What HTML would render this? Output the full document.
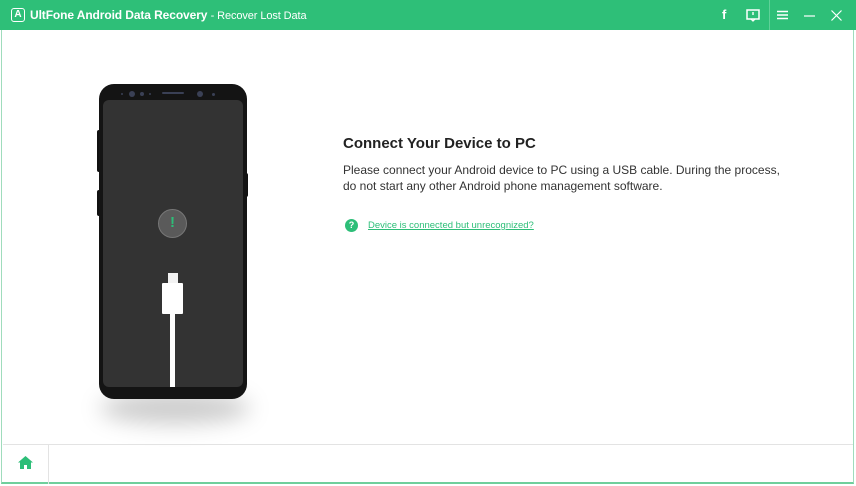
<!DOCTYPE html>
<html><head><meta charset="utf-8"><style>
*{margin:0;padding:0;box-sizing:border-box}
body{width:856px;height:486px;background:#fff;position:relative;overflow:hidden;font-family:"Liberation Sans",sans-serif}
.win{position:absolute;left:1px;top:0;width:853px;height:484px;border:1px solid #9fdcbc;border-top:none;border-bottom:2px solid #6fcf9c;background:#fff}
.tb{position:absolute;left:0;top:0;width:856px;height:30px;background:#2ebf78;color:#fff}
.tb .t{position:absolute;left:30px;top:8px;font-size:12px;font-weight:bold;letter-spacing:-0.1px}
.tb .t span{font-weight:normal;font-size:11px}
.abs{position:absolute}
h1{position:absolute;left:343px;top:135px;font-size:15px;font-weight:bold;color:#222}
.p{position:absolute;left:343px;top:162px;font-size:12px;color:#333;line-height:16px;width:445px}
.link{position:absolute;left:368px;top:220px;font-size:9.5px;color:#2dbe78;text-decoration:underline}
</style></head><body>
<div class="win"></div>
<div class="tb">
<div class="abs" style="left:11px;top:8px;width:14px;height:14px;border:1.5px solid #fff;border-radius:3px;font-size:10px;font-weight:bold;text-align:center;line-height:11px">A</div>
<div class="t">UltFone Android Data Recovery <span>- Recover Lost Data</span></div>
<div class="abs" style="left:722px;top:7px;font-size:13px;font-weight:bold">f</div>
<svg class="abs" style="left:746px;top:9px" width="14" height="13"><rect x="1" y="1" width="12" height="9" fill="none" stroke="#fff" stroke-width="1.5"/><path d="M5 10l2 2 2-2" fill="none" stroke="#fff" stroke-width="1.3"/><rect x="6.3" y="3" width="1.4" height="3" fill="#fff"/></svg>
<div class="abs" style="left:769px;top:0;width:1px;height:30px;background:#5fd198"></div>
<svg class="abs" style="left:777px;top:10px" width="11" height="10"><path d="M0 1.5h11M0 5h11M0 8.5h11" stroke="#fff" stroke-width="1.5"/></svg>
<svg class="abs" style="left:804px;top:10px" width="11" height="10"><path d="M0 6h11" stroke="#fff" stroke-width="1.2"/></svg>
<svg class="abs" style="left:831px;top:10px" width="11" height="11"><path d="M0.5 0.5l10 10M10.5 0.5l-10 10" stroke="#fff" stroke-width="1.2"/></svg>
</div>
<div class="abs" style="left:100px;top:392px;width:150px;height:32px;border-radius:50%;background:rgba(0,0,0,.2);filter:blur(11px)"></div>
<div class="abs" style="left:97px;top:130px;width:4px;height:42px;background:#111;border-radius:2px"></div>
<div class="abs" style="left:97px;top:190px;width:4px;height:26px;background:#111;border-radius:2px"></div>
<div class="abs" style="left:244px;top:173px;width:4px;height:24px;background:#111;border-radius:2px"></div>
<div class="abs" style="left:99px;top:84px;width:148px;height:315px;background:#141414;border-radius:15px"></div>
<div class="abs" style="left:103px;top:100px;width:140px;height:287px;background:#333;border-radius:6px"></div>
<div class="abs" style="left:162px;top:92px;width:22px;height:2px;background:#3a4055;border-radius:1px"></div>
<div class="abs" style="left:121px;top:93px;width:2px;height:2px;background:#3a4055;border-radius:50%"></div>
<div class="abs" style="left:129px;top:91px;width:6px;height:6px;background:#3a4055;border-radius:50%"></div>
<div class="abs" style="left:140px;top:92px;width:4px;height:4px;background:#3a4055;border-radius:50%"></div>
<div class="abs" style="left:149px;top:93px;width:2px;height:2px;background:#3a4055;border-radius:50%"></div>
<div class="abs" style="left:197px;top:91px;width:6px;height:6px;background:#3a4055;border-radius:50%"></div>
<div class="abs" style="left:212px;top:93px;width:3px;height:3px;background:#3a4055;border-radius:50%"></div>
<div class="abs" style="left:158px;top:209px;width:29px;height:29px;background:#5a5a5a;border:1px solid #777;border-radius:50%;color:#2dbe78;font-weight:bold;font-size:15px;text-align:center;line-height:26px">!</div>
<div class="abs" style="left:168px;top:273px;width:10px;height:10px;background:#f2f2f2"></div>
<div class="abs" style="left:162px;top:283px;width:21px;height:31px;background:#fff;border-radius:1px"></div>
<div class="abs" style="left:170px;top:313px;width:5px;height:74px;background:#fff"></div>
<h1>Connect Your Device to PC</h1>
<div class="p">Please connect your Android device to PC using a USB cable. During the process, do not start any other Android phone management software.</div>
<div class="abs" style="left:345px;top:219px;width:13px;height:13px;border-radius:50%;background:#2dbe78;color:#fff;font-size:9px;font-weight:bold;text-align:center;line-height:13px">?</div>
<div class="link">Device is connected but unrecognized?</div>
<div class="abs" style="left:3px;top:444px;width:850px;height:1px;background:#e3e3e3"></div>
<div class="abs" style="left:48px;top:444px;width:1px;height:40px;background:#e3e3e3"></div>
<svg class="abs" style="left:18px;top:456px" width="15" height="13"><path d="M7.5 0L0 6.5h2V13h4V9h3v4h4V6.5h2z" fill="#2dbe78"/></svg>
</body></html>
